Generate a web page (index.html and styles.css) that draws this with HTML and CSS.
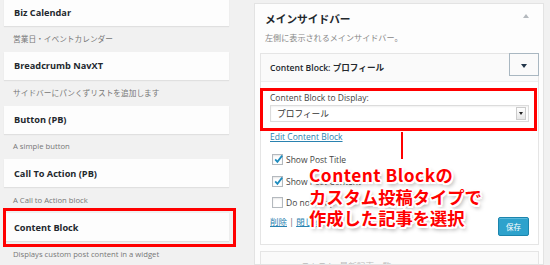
FILE: index.html
```html
<!DOCTYPE html>
<html lang="ja">
<head>
<meta charset="utf-8">
<link rel="stylesheet" href="styles.css">
</head>
<body>
<div class="page">
  <div class="left">
    <div class="card"><span class="card-title">Biz Calendar</span></div>
    <p class="desc">営業日・イベントカレンダー</p>
    <div class="card"><span class="card-title">Breadcrumb NavXT</span></div>
    <p class="desc">サイドバーにパンくずリストを追加します</p>
    <div class="card"><span class="card-title">Button (PB)</span></div>
    <p class="desc">A simple button</p>
    <div class="card"><span class="card-title">Call To Action (PB)</span></div>
    <p class="desc">A Call to Action block</p>
    <div class="card card-hl"><span class="card-title">Content Block</span><span class="redbox redbox-card"></span></div>
    <p class="desc">Displays custom post content in a widget</p>
  </div>

  <div class="panel">
    <div class="panel-head">
      <h3 class="panel-title">メインサイドバー</h3>
      <span class="panel-arrow"></span>
    </div>
    <p class="panel-desc">左側に表示されるメインサイドバー。</p>

    <div class="widget">
      <div class="widget-head">
        <span class="widget-title">Content Block: プロフィール</span>
        <span class="widget-toggle"><span class="tri-down"></span></span>
      </div>
      <div class="widget-body">
        <span class="redbox redbox-field"></span>
        <div class="field-label">Content Block to Display:</div>
        <div class="select">
          <span class="select-text">プロフィール</span>
          <span class="select-btn"><span class="tri-small"></span></span>
        </div>
        <a class="edit-link">Edit Content Block</a>
        <div class="check-row row1"><span class="cb checked"><svg viewBox="0 0 11 11" width="11" height="11"><path d="M2.2 5.4 L4.4 7.8 L9.2 1.6" fill="none" stroke="#1e8cbe" stroke-width="1.8"/></svg></span><span class="check-label">Show Post Title</span></div>
        <div class="check-row row2"><span class="cb checked"><svg viewBox="0 0 11 11" width="11" height="11"><path d="M2.2 5.4 L4.4 7.8 L9.2 1.6" fill="none" stroke="#1e8cbe" stroke-width="1.8"/></svg></span><span class="check-label">Show Post Content</span></div>
        <div class="check-row row3"><span class="cb"></span><span class="check-label">Do not wrap</span></div>
        <div class="actions">
          <span class="action-links"><a class="act">削除</a> <span class="sep">|</span> <a class="act">閉じる</a></span>
          <span class="save-btn">保存</span>
        </div>
      </div>
    </div>

    <div class="widget widget-next">
      <div class="widget-head"><span class="widget-title faint">テキスト: 最新記事一覧</span></div>
    </div>

    <span class="pointer"></span>
    <div class="callout"><span class="callout-latin">Content Block</span>の<br>カスタム投稿タイプで<br>作成した記事を選択</div>
  </div>
</div>
</body>
</html>
```

FILE: styles.css
```css
* { box-sizing: border-box; }
html, body {
  margin: 0;
  padding: 0;
  height: 265px;
  overflow: hidden;
  background: #f1f1f1;
}
body {
  font-family: "Open Sans", "Noto Sans CJK JP", sans-serif;
  color: #444;
}
.page {
  display: flex;
  align-items: flex-start;
  padding-left: 4px;
}

/* left column */
.left {
  width: 225px;
  margin-top: -2px;
  flex: none;
}
.card {
  position: relative;
  height: 28px;
  background: #fdfdfd;
  box-shadow: 0 1px 1px rgba(0,0,0,0.07);
  display: flex;
  align-items: center;
  padding-left: 10px;
}
.card-title {
  font-size: 9.2px;
  font-weight: 700;
  color: #23282d;
}
.desc {
  margin: 0;
  height: 25.75px;
  display: flex;
  align-items: center;
  padding-left: 9px;
  font-size: 7.7px;
  color: #777;
}
.redbox {
  position: absolute;
  border: 3px solid #f00;
  pointer-events: none;
}
.redbox-card {
  left: -1px;
  top: -5px;
  width: 233px;
  height: 39px;
}

/* right panel */
.panel {
  position: relative;
  margin-left: 25px;
  margin-top: 3px;
  width: 290px;
  height: 262px;
  overflow: hidden;
  flex: none;
  background: #fdfdfd;
  border: 1px solid #e3e3e3;
  padding: 0 4px 0 5px;
}
.panel-head {
  position: relative;
  padding-top: 8px;
  padding-left: 5px;
}
.panel-title {
  margin: 0;
  font-size: 10.7px;
  line-height: 14px;
  font-weight: 700;
  color: #23282d;
}
.panel-arrow {
  position: absolute;
  right: 10px;
  top: 10px;
  width: 0;
  height: 0;
  border-left: 3px solid transparent;
  border-right: 3px solid transparent;
  border-bottom: 4px solid #b4b9be;
}
.panel-desc {
  margin: 6px 0 9px 5px;
  font-size: 8.1px;
  line-height: 12px;
  color: #888;
}

.widget {
  border: 1px solid #e5e5e5;
  background: #fff;
}
.widget-head {
  position: relative;
  height: 28px;
  background: #fafafa;
  border-bottom: 1px solid #eee;
  display: flex;
  align-items: center;
  padding-left: 9px;
}
.widget-title {
  font-size: 8.6px;
  font-weight: 600;
  color: #23282d;
}
.widget-toggle {
  position: absolute;
  top: -1px;
  right: -1px;
  width: 30px;
  height: 23px;
  border: 1px solid #a9b7c1;
  background: #fafafa;
  display: flex;
  align-items: center;
  justify-content: center;
}
.tri-down {
  width: 0;
  height: 0;
  margin-top: 3px;
  border-left: 3.5px solid transparent;
  border-right: 3.5px solid transparent;
  border-top: 4.5px solid #23364a;
}
.widget-body {
  position: relative;
  padding: 10px 9px 8px 9px;
}
.redbox-field {
  left: -1px;
  top: 6px;
  width: 277px;
  height: 43px;
}
.field-label {
  font-size: 8.5px;
  line-height: 12px;
  color: #444;
}
.select {
  margin-top: 1px;
  width: 259px;
  height: 17px;
  border: 1px solid #dcdcdc;
  box-shadow: inset 0 1px 2px rgba(0,0,0,0.06);
  background: #fff;
  display: flex;
  align-items: center;
  justify-content: space-between;
  padding: 0 2px 0 6px;
}
.select-text {
  font-size: 8.7px;
  color: #333;
}
.select-btn {
  width: 10px;
  height: 13px;
  border: 1px solid #ccc;
  background: linear-gradient(#fff, #e6e6e6);
  display: flex;
  align-items: center;
  justify-content: center;
}
.tri-small {
  width: 0;
  height: 0;
  border-left: 2px solid transparent;
  border-right: 2px solid transparent;
  border-top: 3px solid #222;
}
.edit-link {
  display: block;
  margin-top: 9px;
  font-size: 8.5px;
  line-height: 12px;
  color: #2a82b0;
  text-decoration: underline;
}
.check-row {
  display: flex;
  align-items: center;
  height: 14px;
  padding-left: 2px;
}
.row1 { margin-top: 9px; }
.row2 { margin-top: 8px; }
.row3 { margin-top: 7px; }
.cb {
  width: 11px;
  height: 11px;
  border: 1px solid #b4b9be;
  background: #fff;
  box-shadow: inset 0 1px 2px rgba(0,0,0,0.1);
  display: flex;
  align-items: center;
  justify-content: center;
  margin-right: 3px;
  position: relative;
}
.cb svg {
  position: absolute;
  left: 0;
  top: -1px;
}
.check-label {
  font-size: 8.5px;
  color: #444;
}
.actions {
  margin-top: 7px;
  display: flex;
  justify-content: space-between;
  align-items: flex-start;
}
.action-links {
  font-size: 8.5px;
  line-height: 12px;
}
.act {
  color: #2a82b0;
  text-decoration: underline;
}
.sep { color: #666; }
.save-btn {
  margin-top: 1px;
  width: 31px;
  height: 19px;
  background: #2ea2cc;
  border: 1px solid #1c85ad;
  border-radius: 2px;
  box-shadow: inset 0 1px 0 rgba(120,200,230,0.6);
  color: #fff;
  font-size: 7.5px;
  display: flex;
  align-items: center;
  justify-content: center;
}

.widget-next {
  margin-top: 6px;
  height: 40px;
  background: #f9f9f9;
}
.widget-next .widget-head {
  padding-left: 40px;
  align-items: flex-start;
  padding-top: 8px;
}
.faint {
  color: #bbb;
  font-weight: 400;
}

.pointer {
  position: absolute;
  left: 146px;
  top: 128px;
  width: 2px;
  height: 27px;
  background: #f00;
}
.callout {
  position: absolute;
  left: 54px;
  top: 160px;
  font-family: "Noto Sans CJK JP", sans-serif;
  font-weight: 700;
  font-size: 17.3px;
  line-height: 21.5px;
  color: #f00;
  white-space: nowrap;
  text-shadow:
    -1.5px -1.5px 0 #fff, 1.5px -1.5px 0 #fff, -1.5px 1.5px 0 #fff, 1.5px 1.5px 0 #fff,
    0 -2px 0 #fff, 0 2px 0 #fff, -2px 0 0 #fff, 2px 0 0 #fff,
    2px 3px 4px rgba(0,0,0,0.45);
}
.callout-latin {
  letter-spacing: 0.5px;
}
```
